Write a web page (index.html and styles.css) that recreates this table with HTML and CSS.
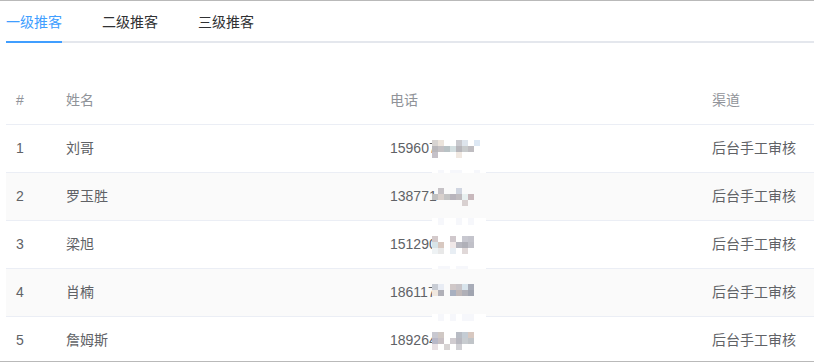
FILE: index.html
```html
<!DOCTYPE html>
<html lang="zh">
<head>
<meta charset="utf-8">
<title>推荐</title>
<link rel="stylesheet" href="styles.css">
</head>
<body>
<div class="frame">
  <div class="tabs">
    <div class="tab active">一级推客</div>
    <div class="tab">二级推客</div>
    <div class="tab">三级推客</div>
  </div>
  <table class="grid">
    <colgroup><col class="c1"><col class="c2"><col class="c3"><col class="c4"></colgroup>
    <thead>
      <tr><th>#</th><th>姓名</th><th>电话</th><th>渠道</th></tr>
    </thead>
    <tbody>
      <tr>
        <td>1</td><td>刘哥</td>
        <td class="phone">159607
          <div class="mosaic">
            <i style="background:#d8d4d2"></i><i style="background:#ece4dc"></i><i></i><i></i><i style="background:#c9c9ce"></i><i style="background:#dde4ec"></i><i></i><i style="background:#dde8f4"></i>
            <i style="background:#b9b7bb"></i><i style="background:#c4c1c4"></i><i style="background:#b9c2c5"></i><i style="background:#d3dee0"></i><i style="background:#b7b6bb"></i><i style="background:#c8cbcc"></i><i style="background:#bfbdc1"></i><i></i>
            <i style="background:#c5c1c8"></i><i></i><i></i><i></i><i style="background:#f0e8e1"></i><i></i><i></i><i></i>
          </div>
          <div class="edge"><i></i><i class="f"></i><i></i><i class="f"></i><i class="f"></i><i></i><i></i><i class="f"></i><i></i></div>
        </td>
        <td>后台手工审核</td>
      </tr>
      <tr class="striped">
        <td>2</td><td>罗玉胜</td>
        <td class="phone">138771
          <div class="mosaic">
            <i></i><i style="background:#c6c2c6"></i><i></i><i></i><i style="background:#d0d5e0"></i><i></i><i></i><i></i>
            <i style="background:#c1c1c1"></i><i style="background:#d8d0cc"></i><i style="background:#c4c4c4"></i><i style="background:#b8b4bc"></i><i style="background:#c0bcc0"></i><i style="background:#e8f0f0"></i><i style="background:#c8b8bc"></i><i></i>
            <i></i><i></i><i></i><i></i><i></i><i style="background:#d8d0d0"></i><i></i><i></i>
          </div>
          <div class="edge"><i></i><i class="f"></i><i></i><i></i><i class="f"></i><i></i><i class="f"></i><i></i><i></i></div>
        </td>
        <td>后台手工审核</td>
      </tr>
      <tr>
        <td>3</td><td>梁旭</td>
        <td class="phone">151290
          <div class="mosaic">
            <i style="background:#d4cacb"></i><i></i><i></i><i style="background:#d0c8cc"></i><i></i><i style="background:#c8c8d0"></i><i style="background:#c4c4cc"></i><i></i>
            <i style="background:#d8e4e8"></i><i style="background:#d8c8c0"></i><i></i><i style="background:#f0e8e8"></i><i style="background:#b8b8c0"></i><i style="background:#b0b0b8"></i><i style="background:#c0c0c8"></i><i></i>
            <i style="background:#eef2f4"></i><i style="background:#e8e8e8"></i><i></i><i style="background:#e8eef4"></i><i></i><i style="background:#e0d8d8"></i><i></i><i></i>
          </div>
          <div class="edge"><i></i><i class="f"></i><i class="f"></i><i></i><i class="f"></i><i class="f"></i><i></i><i></i><i></i></div>
        </td>
        <td>后台手工审核</td>
      </tr>
      <tr class="striped">
        <td>4</td><td>肖楠</td>
        <td class="phone">186117
          <div class="mosaic">
            <i style="background:#c8ccd4"></i><i style="background:#e8ecf4"></i><i></i><i style="background:#d0c8c8"></i><i style="background:#c8c4c8"></i><i style="background:#d8e4ec"></i><i style="background:#a8acb8"></i><i></i>
            <i style="background:#f0e8e0"></i><i style="background:#b0b0b8"></i><i></i><i style="background:#a8b0c0"></i><i style="background:#c0b8b8"></i><i style="background:#b0b0b8"></i><i style="background:#a0a4b0"></i><i></i>
            <i></i><i></i><i></i><i></i><i></i><i></i><i></i><i></i>
          </div>
          <div class="edge"><i></i><i class="f"></i><i></i><i class="f"></i><i></i><i class="f"></i><i class="f"></i><i></i><i></i></div>
        </td>
        <td>后台手工审核</td>
      </tr>
      <tr>
        <td>5</td><td>詹姆斯</td>
        <td class="phone">189264
          <div class="mosaic">
            <i style="background:#c8c8d0"></i><i style="background:#d0c8c4"></i><i></i><i></i><i style="background:#b8bcc4"></i><i style="background:#c4ccd4"></i><i style="background:#d8c8c0"></i><i></i>
            <i style="background:#b8b8c8"></i><i style="background:#c8c0c4"></i><i></i><i style="background:#d0ccd0"></i><i style="background:#b8b8c0"></i><i style="background:#c8ccd0"></i><i style="background:#c0c4c8"></i><i></i>
            <i style="background:#e8e0e4"></i><i></i><i style="background:#d8d4d4"></i><i></i><i style="background:#d0d0d4"></i><i></i><i></i><i></i>
          </div>
        </td>
        <td>后台手工审核</td>
      </tr>
    </tbody>
  </table>
</div>
</body>
</html>
```

FILE: styles.css
```css
* { box-sizing: border-box; }
html, body { margin: 0; padding: 0; background: #fff; }
body {
  font-family: "Liberation Sans", "Noto Sans CJK SC", sans-serif;
  font-size: 14px;
  color: #606266;
}
.frame {
  width: 814px;
  height: 362px;
  overflow: hidden;
  border-top: 1px solid #b9b9b9;
  border-bottom: 1px solid #b9b9b9;
  padding-left: 6px;
}
.tabs {
  display: flex;
  height: 42px;
  border-bottom: 2px solid #e4e7ed;
}
.tab {
  position: relative;
  height: 40px;
  line-height: 40px;
  padding: 0 20px;
  color: #303133;
  font-family: "Noto Sans CJK SC", sans-serif;
  font-size: 14px;
}
.tab:first-child { padding-left: 0; }
.tab.active { color: #409eff; }
.tab.active::after {
  content: "";
  position: absolute;
  left: 0;
  right: 20px;
  bottom: -2px;
  height: 2px;
  background: #409eff;
}
.grid {
  margin-top: 34px;
  width: 808px;
  border-collapse: collapse;
  table-layout: fixed;
}
.c1 { width: 50px; }
.c2 { width: 324px; }
.c3 { width: 322px; }
.c4 { width: 112px; }
th, td {
  text-align: left;
  padding: 12px 10px;
  line-height: 23px;
  border-bottom: 1px solid #ebeef5;
  white-space: nowrap;
  font-weight: normal;
}
th { color: #909399; }
td { color: #606266; }
tr.striped td { background: #fafafa; }
.phone { position: relative; }
.mosaic {
  position: absolute;
  left: 52px;
  top: 15px;
  display: grid;
  grid-template-columns: repeat(8, 6px);
  grid-auto-rows: 6px;
}
.mosaic i, .edge i { display: block; }
.edge {
  position: absolute;
  left: 52px;
  bottom: -5px;
  display: grid;
  grid-template-columns: repeat(9, 6px);
  grid-auto-rows: 7px;
  background: #fff;
}
.edge i.f { background: #f6f7fb; }
```
